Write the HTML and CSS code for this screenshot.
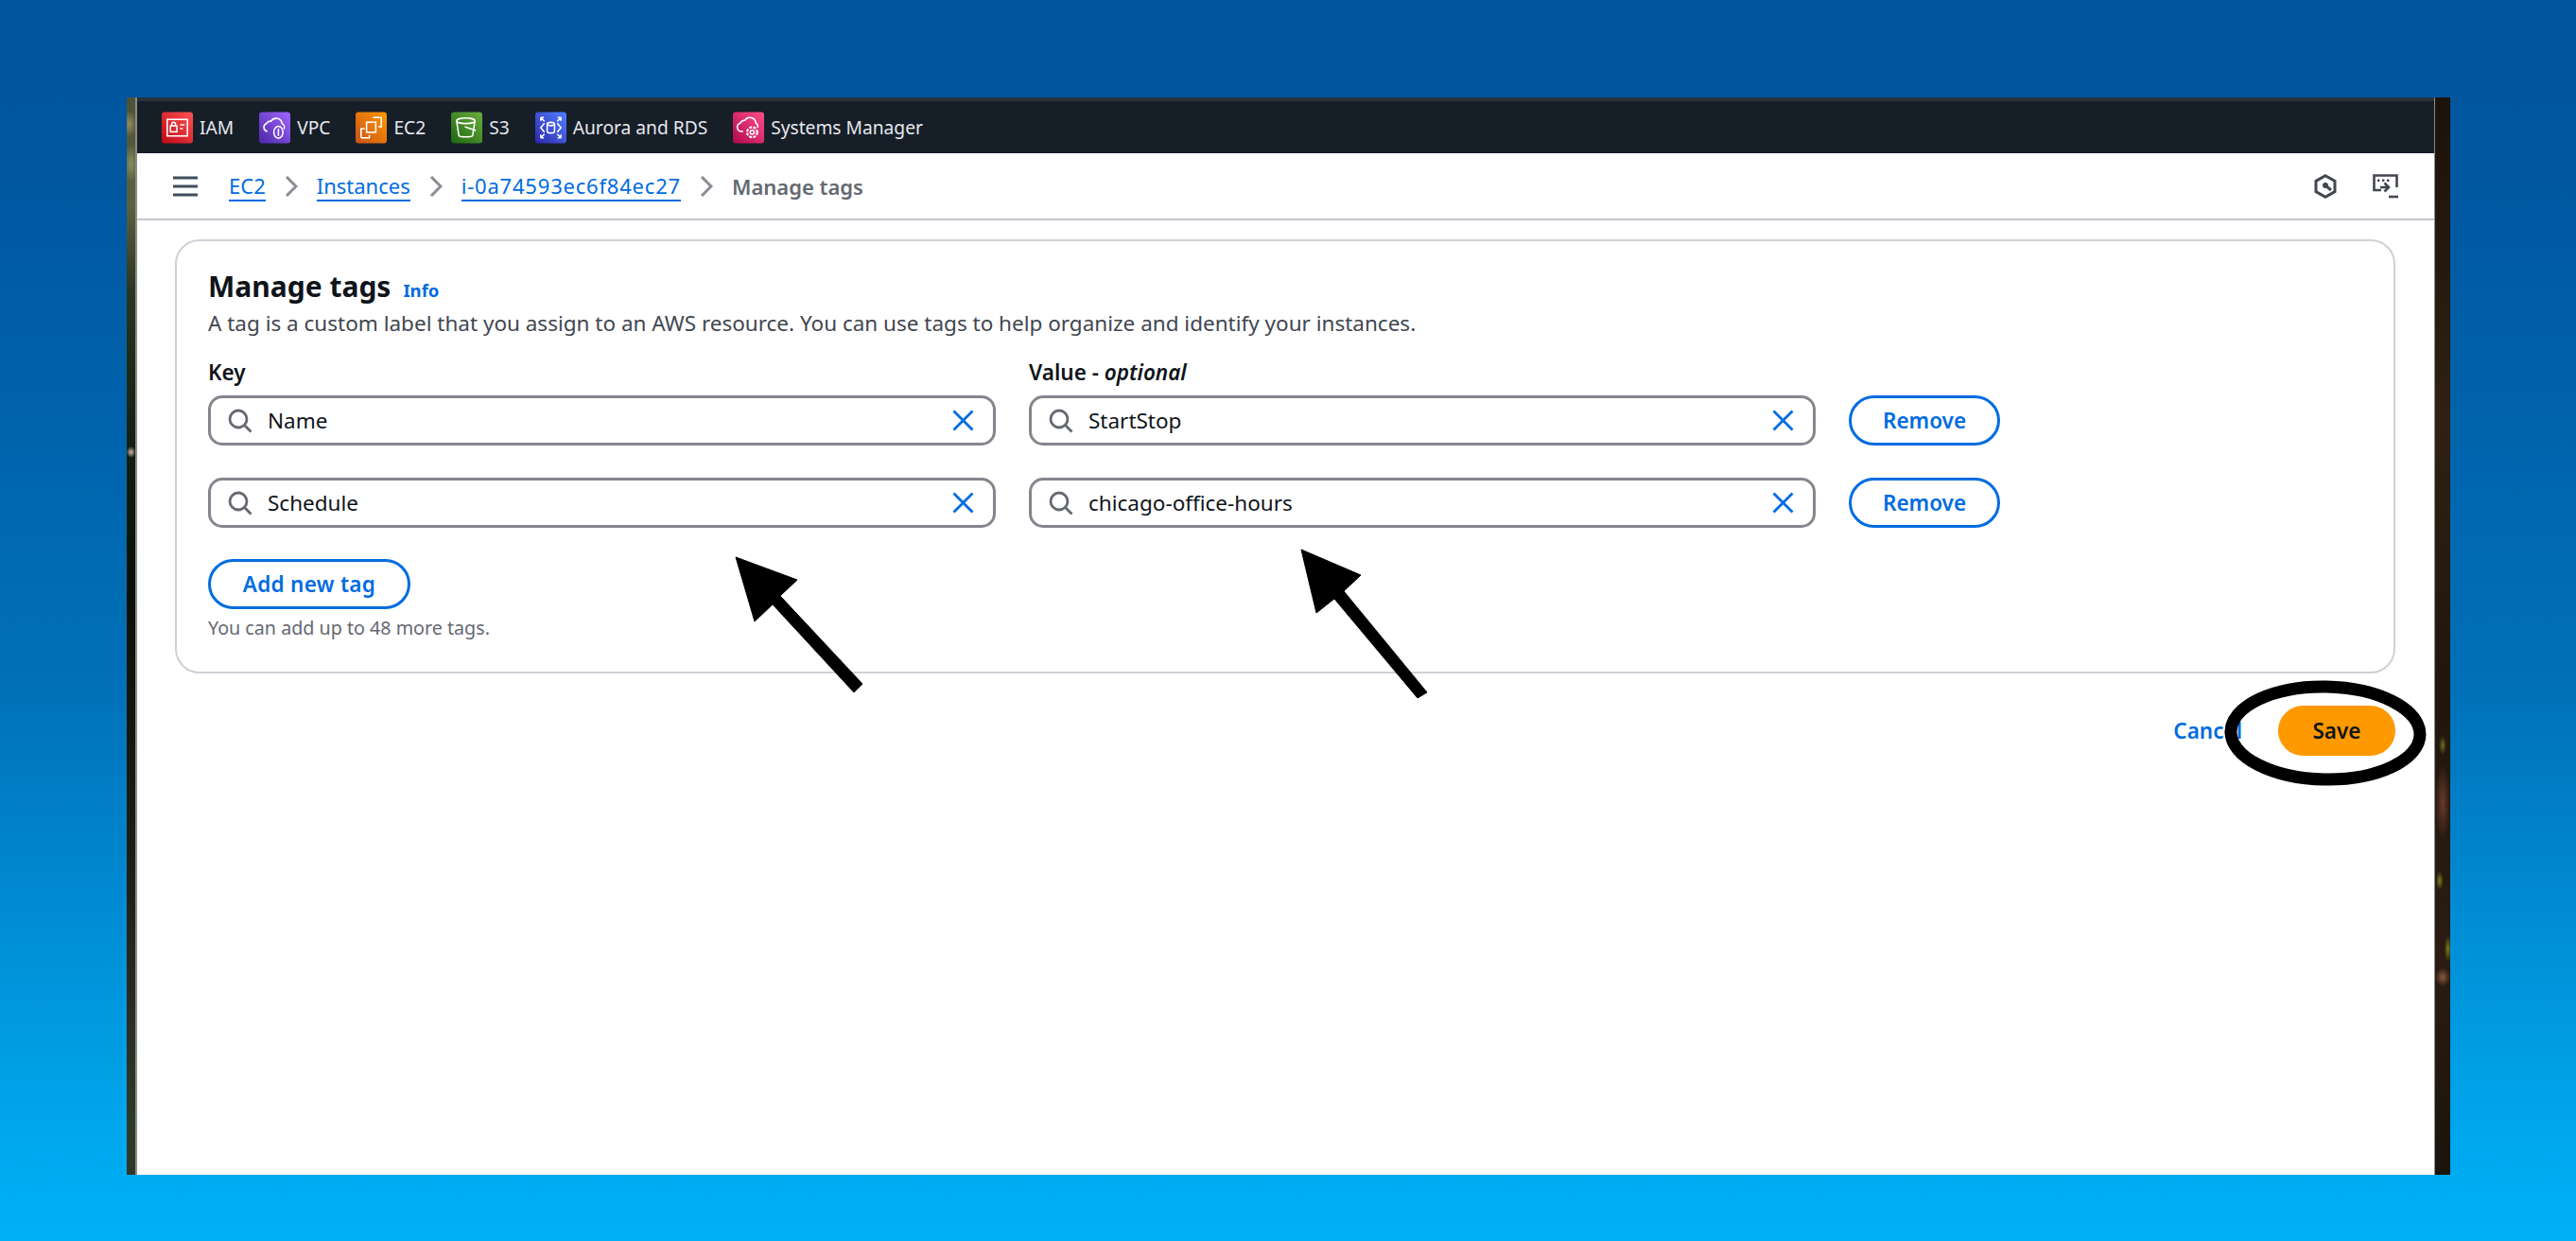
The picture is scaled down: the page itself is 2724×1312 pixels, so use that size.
FILE: index.html
```html
<!DOCTYPE html>
<html>
<head>
	<title>Manage tags</title>
	<link rel="stylesheet" href="styles.css">
</head>
<body>
	<div class="window">
		<div class="edgeLeft"></div>

		<div class="console">
			<div class="shortcuts">
				<a class="shortcut">
					<svg class="svcIcon" viewBox="0 0 34 34"><defs><linearGradient id="gRed" x1="0" y1="1" x2="1" y2="0"><stop offset="0" stop-color="#bd0816"/><stop offset="1" stop-color="#ff5252"/></linearGradient></defs><rect width="34" height="34" rx="3" fill="url(#gRed)"/><g fill="none" stroke="#fff" stroke-width="1.6"><rect x="6" y="8" width="22" height="18"/><rect x="9.5" y="15" width="7" height="6.5"/><path d="M11 15v-2a2 2 0 0 1 4 0v2M20 14h5M20 18h3"/></g></svg>
					<span>IAM</span>
				</a>
				<a class="shortcut">
					<svg class="svcIcon" viewBox="0 0 34 34"><defs><linearGradient id="gPurple" x1="0" y1="1" x2="1" y2="0"><stop offset="0" stop-color="#4d27a8"/><stop offset="1" stop-color="#a166ff"/></linearGradient></defs><rect width="34" height="34" rx="3" fill="url(#gPurple)"/><g fill="none" stroke="#fff" stroke-width="1.6"><path d="M9 21a4.5 4.5 0 0 1-1-8.6A5 5 0 0 1 13 10a6.5 6.5 0 0 1 12 2.5 4.5 4.5 0 0 1 2 6"/><ellipse cx="21" cy="22" rx="5" ry="6.5"/><path d="M21 18v8"/></g></svg>
					<span>VPC</span>
				</a>
				<a class="shortcut">
					<svg class="svcIcon" viewBox="0 0 34 34"><defs><linearGradient id="gOrange" x1="0" y1="1" x2="1" y2="0"><stop offset="0" stop-color="#c8511b"/><stop offset="1" stop-color="#ff9900"/></linearGradient></defs><rect width="34" height="34" rx="3" fill="url(#gOrange)"/><g fill="none" stroke="#fff" stroke-width="1.6"><path d="M19 6h9v10h-3M6 28V18h4M6 28h9v-3"/><rect x="12" y="11" width="10" height="11"/></g></svg>
					<span>EC2</span>
				</a>
				<a class="shortcut">
					<svg class="svcIcon" viewBox="0 0 34 34"><defs><linearGradient id="gGreen" x1="0" y1="1" x2="1" y2="0"><stop offset="0" stop-color="#1b660f"/><stop offset="1" stop-color="#6cae3e"/></linearGradient></defs><rect width="34" height="34" rx="3" fill="url(#gGreen)"/><g fill="none" stroke="#fff" stroke-width="1.6"><ellipse cx="16" cy="9.500" rx="10" ry="3"/><path d="M6 9.500l2.500 16c.5 2 14.500 2 15 0l2.500-16M15 16l12 4"/></g></svg>
					<span>S3</span>
				</a>
				<a class="shortcut">
					<svg class="svcIcon" viewBox="0 0 34 34"><defs><linearGradient id="gBlue" x1="0" y1="1" x2="1" y2="0"><stop offset="0" stop-color="#2e27ad"/><stop offset="1" stop-color="#527fff"/></linearGradient></defs><rect width="34" height="34" rx="3" fill="url(#gBlue)"/><g fill="none" stroke="#fff" stroke-width="1.6"><ellipse cx="17" cy="13" rx="4" ry="1.800"/><path d="M13 13v8c0 2.400 8 2.400 8 0v-8M10 12l-4 5 4 5M24 12l4 5-4 5M6 6l4 4M6 6h3.500M6 6v3.500M28 6l-4 4M28 6h-3.500M28 6v3.500M6 28l4-4M6 28h3.500M6 28v-3.500M28 28l-4-4M28 28h-3.500M28 28v-3.500"/></g></svg>
					<span>Aurora and RDS</span>
				</a>
				<a class="shortcut">
					<svg class="svcIcon" viewBox="0 0 34 34"><defs><linearGradient id="gPink" x1="0" y1="1" x2="1" y2="0"><stop offset="0" stop-color="#b0084d"/><stop offset="1" stop-color="#ff4f8b"/></linearGradient></defs><rect width="34" height="34" rx="3" fill="url(#gPink)"/><g fill="none" stroke="#fff" stroke-width="1.6"><path d="M11 21H9a4.500 4.500 0 0 1-1-8.800A5 5 0 0 1 13 9a6.500 6.500 0 0 1 12 3 4.500 4.500 0 0 1 2 5"/><circle cx="21" cy="22" r="2.200"/><circle cx="21" cy="22" r="5.500" stroke-dasharray="3 1.400" stroke-width="2.200"/></g></svg>
					<span>Systems Manager</span>
				</a>
			</div>

			<div class="crumbBar">
				<svg class="burger" viewBox="0 0 26 22"><path d="M0 2h26M0 11h26M0 20h26" stroke="#414d5c" stroke-width="3.200"/></svg>
				<a class="crumb">EC2</a>
				<svg class="chevron" viewBox="0 0 14 22"><path d="M2 1l10 10L2 21" fill="none" stroke="#8c8c94" stroke-width="3"/></svg>
				<a class="crumb">Instances</a>
				<svg class="chevron" viewBox="0 0 14 22"><path d="M2 1l10 10L2 21" fill="none" stroke="#8c8c94" stroke-width="3"/></svg>
				<a class="crumb crumbId">i-0a74593ec6f84ec27</a>
				<svg class="chevron" viewBox="0 0 14 22"><path d="M2 1l10 10L2 21" fill="none" stroke="#8c8c94" stroke-width="3"/></svg>
				<span class="crumbNow">Manage tags</span>
				<div class="crumbTools">
					<svg class="toolHex" viewBox="0 0 24 26"><g fill="none" stroke="#424650" stroke-width="3"><path d="M12 1.700l10 5.700v11.200l-10 5.700-10-5.700V7.400z"/><path d="M12 12l6 5"/></g><circle cx="12" cy="12" r="3" fill="#424650"/></svg>
					<svg class="toolTerm" viewBox="0 0 27 26"><g fill="none" stroke="#424650" stroke-width="2.600"><path d="M9 17H1.500V1.500h24V14"/><path d="M8 14h9M12.500 9.500l4.500 4.500-4.500 4.500"/><path d="M17 24h10"/></g><path d="M5 5.500h2.400v2.400H5zM10 5.500h2.400v2.400H10zM15 5.500h2.400v2.400H15z" fill="#424650"/></svg>
				</div>
			</div>

			<div class="content">
				<div class="card">
					<div class="cardHead">
						<h1>Manage tags</h1>
						<a class="info">Info</a>
					</div>
					<p class="desc">A tag is a custom label that you assign to an AWS resource. You can use tags to help organize and identify your instances.</p>

					<div class="tagGrid">
						<label class="fieldLabel">Key</label>
						<label class="fieldLabel">Value - <i>optional</i></label>
						<span></span>

						<div class="field">
							<svg class="search" viewBox="0 0 26 26"><g fill="none" stroke="#656871" stroke-width="2.800"><circle cx="11" cy="11" r="9"/><path d="M17.500 17.500l7 7"/></g></svg>
							<span class="fieldText">Name</span>
							<svg class="clear" viewBox="0 0 23 23"><path d="M1.500 1.500l20 20M21.500 1.500l-20 20" stroke="#006ce0" stroke-width="2.800"/></svg>
						</div>
						<div class="field">
							<svg class="search" viewBox="0 0 26 26"><g fill="none" stroke="#656871" stroke-width="2.800"><circle cx="11" cy="11" r="9"/><path d="M17.500 17.500l7 7"/></g></svg>
							<span class="fieldText">StartStop</span>
							<svg class="clear" viewBox="0 0 23 23"><path d="M1.500 1.500l20 20M21.500 1.500l-20 20" stroke="#006ce0" stroke-width="2.800"/></svg>
						</div>
						<button class="pill remove">Remove</button>

						<div class="field">
							<svg class="search" viewBox="0 0 26 26"><g fill="none" stroke="#656871" stroke-width="2.800"><circle cx="11" cy="11" r="9"/><path d="M17.500 17.500l7 7"/></g></svg>
							<span class="fieldText">Schedule</span>
							<svg class="clear" viewBox="0 0 23 23"><path d="M1.500 1.500l20 20M21.500 1.500l-20 20" stroke="#006ce0" stroke-width="2.800"/></svg>
						</div>
						<div class="field">
							<svg class="search" viewBox="0 0 26 26"><g fill="none" stroke="#656871" stroke-width="2.800"><circle cx="11" cy="11" r="9"/><path d="M17.500 17.500l7 7"/></g></svg>
							<span class="fieldText">chicago-office-hours</span>
							<svg class="clear" viewBox="0 0 23 23"><path d="M1.500 1.500l20 20M21.500 1.500l-20 20" stroke="#006ce0" stroke-width="2.800"/></svg>
						</div>
						<button class="pill remove">Remove</button>
					</div>

					<button class="pill addTag">Add new tag</button>
					<p class="hint">You can add up to 48 more tags.</p>
				</div>

				<div class="actions">
					<a class="cancel">Cancel</a>
					<button class="save">Save</button>
				</div>
			</div>
		</div>

		<div class="edgeRight"></div>
	</div>

	<!-- annotations drawn on top of the screenshot -->
	<svg class="marks" viewBox="0 0 2724 1312">
		<path d="M778 589L843 613L825 630L912 723L903 732L817 639L798 657Z" stroke="#000"/>
		<path d="M1376 581L1439 608L1421 625L1509 732L1499 738L1411 633L1392 648Z" stroke="#000"/>
		<ellipse cx="2459" cy="775" rx="100" ry="49" fill="none" stroke="#000" stroke-width="13" transform="rotate(1 2459 775)"/>
	</svg>
</body>
</html>
```

FILE: styles.css
```css
html, body{
	margin:0;
	height:100%;
}

body{
	width:2724px;
	height:1312px;
	overflow:hidden;
	box-sizing:border-box;
	padding:103px 133px 70px 134px;
	background:linear-gradient(180deg, #00559f 0, #00569f 12%, #0070b8 55%, #00a8ee 92%, #00b0f5 100%);
	font-family:"Noto Sans", "Open Sans", sans-serif;
	color:#0f141a;
}

.window{
	display:flex;
	height:100%;
}

	/* blurred wallpaper showing at the window edges */
	.edgeLeft{
		width:9px;
		border-right:2px solid #8a8c88;
		background:
			radial-gradient(5px 6px at 50% 375px, #d8b8b0, transparent),
			radial-gradient(8px 14px at 30% 28px, #9a8a60, transparent),
			radial-gradient(8px 20px at 50% 70px, #8a9060, transparent),
			linear-gradient(180deg, #4c5236 0, #5c6040 10%, #2c3420 18%, #141e12 32%, #0a0f08 45%, #1c1c16 70%, #2a2c22 85%, #2c3a28 95%, #303828 100%);
	}

	.edgeRight{
		width:16px;
		border-left:1px solid #8a8a86;
		background:
			radial-gradient(8px 40px at 50% 745px, #6a3a2c, transparent),
			radial-gradient(4px 10px at 30% 828px, #7c7c20, transparent),
			radial-gradient(4px 14px at 85% 900px, #7c7c20, transparent),
			radial-gradient(8px 10px at 50% 930px, #8a5a3c, transparent),
			radial-gradient(4px 10px at 50% 685px, #6c7020, transparent),
			linear-gradient(180deg, #1c120a 0, #2e2014 30%, #20160e 55%, #2a1c12 80%, #1a140c 100%);
	}

.console{
	flex:1;
	display:flex;
	flex-direction:column;
	background:#fff;
}

.shortcuts{
	display:flex;
	align-items:center;
	height:59px;
	box-sizing:border-box;
	padding:0 0 0 26px;
	gap:27px;
	background:#161e28;
	border-top:4px solid #2c323c;
	color:#e6e8ec;
	font-size:19.200px;
}

	.shortcut{
		display:flex;
		align-items:center;
		gap:7px;
	}

	.svcIcon{
		width:33px;
		height:34px;
	}

.crumbBar{
	display:flex;
	align-items:center;
	height:71px;
	box-sizing:border-box;
	padding:0 38px 0 38px;
	border-bottom:2px solid #c6c6cd;
	font-size:22px;
}

	.burger{
		width:26px;
		height:22px;
		margin-right:33px;
	}

	.crumb{
		color:#006ce0;
		border-bottom:2px solid #006ce0;
		line-height:30px;
	}

	.crumbId{
		letter-spacing:.8px;
	}

	.chevron{
		width:14px;
		height:22px;
		margin:0 20px;
	}

	.crumbNow{
		color:#656871;
		font-weight:600;
	}

	.crumbTools{
		margin-left:auto;
		display:flex;
		align-items:center;
		gap:38px;
	}

	.toolHex{
		width:24px;
		height:26px;
	}

	.toolTerm{
		width:27px;
		height:26px;
	}

.content{
	padding:20px 41px 0 40px;
}

.card{
	box-sizing:border-box;
	height:459px;
	padding:26px 33px 0 33px;
	border:2px solid #d0d0d8;
	border-radius:26px;
}

	.cardHead{
		display:flex;
		align-items:baseline;
		gap:13px;
	}

	h1{
		margin:0;
		font-size:30px;
		line-height:44px;
		font-weight:700;
	}

	.info{
		color:#006ce0;
		font-size:18.500px;
		font-weight:700;
	}

	.desc{
		margin:0;
		font-size:22.500px;
		line-height:34px;
		color:#424650;
	}

.tagGrid{
	display:grid;
	grid-template-columns:833px 832px 160px;
	column-gap:35px;
	row-gap:34px;
	margin-top:18px;
}

	.fieldLabel{
		margin-bottom:-27px;
		font-size:22.500px;
		font-weight:600;
		line-height:34px;
	}

		.fieldLabel i{
			font-weight:600;
		}

	.field{
		display:flex;
		align-items:center;
		height:53px;
		box-sizing:border-box;
		padding:0 20px 0 18px;
		border:3px solid #85858e;
		border-radius:15px;
	}

	.search{
		width:26px;
		height:26px;
		margin-right:16px;
	}

	.fieldText{
		flex:1;
		font-size:22.500px;
	}

	.clear{
		width:23px;
		height:23px;
	}

.pill{
	box-sizing:border-box;
	height:53px;
	border:3px solid #006ce0;
	border-radius:27px;
	background:#fff;
	color:#006ce0;
	font-family:inherit;
	font-size:22.500px;
	font-weight:600;
}

.addTag{
	display:block;
	width:214px;
	margin-top:33px;
	letter-spacing:.3px;
}

.hint{
	margin:5px 0 0;
	font-size:19.700px;
	line-height:30px;
	color:#656871;
}

.actions{
	display:flex;
	justify-content:flex-end;
	align-items:center;
	gap:38px;
	margin-top:34px;
}

	.cancel{
		color:#006ce0;
		font-size:22.500px;
		font-weight:600;
	}

	.save{
		width:124px;
		height:53px;
		border:0;
		border-radius:27px;
		background:#ff9900;
		color:#0f141a;
		font-family:inherit;
		font-size:22.500px;
		font-weight:600;
	}

.marks{
	position:absolute;
	top:0;
	left:0;
	width:2724px;
	height:1312px;
}
```
